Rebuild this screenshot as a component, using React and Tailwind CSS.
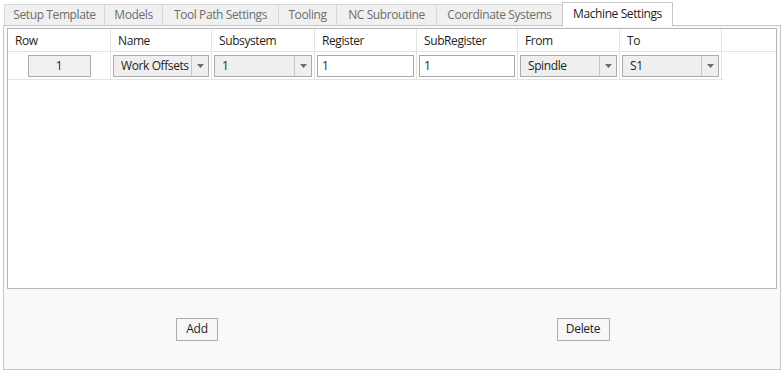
const TABS = [
  { label: "Setup Template", w: "w-[101px]" },
  { label: "Models", w: "w-[58px]" },
  { label: "Tool Path Settings", w: "w-[116px]" },
  { label: "Tooling", w: "w-[58px]" },
  { label: "NC Subroutine", w: "w-[100px]" },
  { label: "Coordinate Systems", w: "w-[126px]" },
];

const COLUMNS = [
  { label: "Row", w: "w-[103px]" },
  { label: "Name", w: "w-[101px]" },
  { label: "Subsystem", w: "w-[103px]" },
  { label: "Register", w: "w-[102px]" },
  { label: "SubRegister", w: "w-[101px]" },
  { label: "From", w: "w-[102px]" },
  { label: "To", w: "w-[102px]" },
];

function Combo({ value }) {
  return (
    <div className="flex h-[22px] w-full border border-[#acacac] bg-[#efefef]">
      <span className="flex-1 overflow-hidden whitespace-nowrap pl-[7px] leading-[20px]">{value}</span>
      <span className="flex w-[17px] shrink-0 items-center justify-center border-l border-[#c8c8c8]">
        <svg width="7" height="4" viewBox="0 0 7 4">
          <path d="M0 0h7L3.5 4z" fill="#6b6b6b" />
        </svg>
      </span>
    </div>
  );
}

function TextBox({ value }) {
  return (
    <div className="h-[22px] w-full border border-[#a8a8a8] bg-white pl-[4px] leading-[20px]">{value}</div>
  );
}

function Button({ children, w }) {
  return (
    <button className={`h-[23px] ${w} border border-[#adadad] bg-[#f7f7f7] text-[12px] tracking-[-0.3px] text-[#1e1e1e]`}>
      {children}
    </button>
  );
}

export default function App() {
  return (
    <div className="h-[371px] w-[784px] bg-white text-[12px] tracking-[-0.4px] text-[#1e1e1e] [font-family:'Segoe_UI','Open_Sans',sans-serif]">
      <div className="flex items-end pl-[4px] pt-[2px]">
        {TABS.map((t, i) => (
          <div
            key={t.label}
            className={`${t.w} h-[21px] border-t border-r border-[#d9d9d9] bg-[#f0f0f0] text-center leading-[20px] text-[#6d6d6d] ${i === 0 ? "border-l" : ""}`}
          >
            {t.label}
          </div>
        ))}
        <div className="relative z-10 -mb-px ml-[-1px] h-[24px] w-[111px] border border-b-0 border-[#c8c8c8] bg-white text-center leading-[22px]">
          Machine Settings
        </div>
      </div>
      <div className="mx-[3px] flex h-[345px] flex-col border border-[#c8c8c8] bg-[#f9f9f9]">
        <div className="mx-[3px] mt-[2px] h-[261px] border border-[#b9b9b9] bg-white">
          <div className="flex h-[23px] border-b border-[#e3e3e3]">
            {COLUMNS.map((c) => (
              <div key={c.label} className={`${c.w} border-r border-[#e3e3e3] pl-[7px] pt-[1px] leading-[22px]`}>
                {c.label}
              </div>
            ))}
          </div>
          <div className="flex h-[28px] w-[715px] border-b border-[#e3e3e3]">
            <div className="flex w-[103px] items-center justify-center border-r border-[#e3e3e3]">
              <div className="h-[22px] w-[63px] border border-[#acacac] bg-[#f0f0f0] text-center leading-[20px]">1</div>
            </div>
            <div className="flex w-[101px] items-center border-r border-[#e3e3e3] px-[2px]">
              <Combo value="Work Offsets" />
            </div>
            <div className="flex w-[103px] items-center border-r border-[#e3e3e3] px-[2px]">
              <Combo value="1" />
            </div>
            <div className="flex w-[102px] items-center border-r border-[#e3e3e3] px-[2px]">
              <TextBox value="1" />
            </div>
            <div className="flex w-[101px] items-center border-r border-[#e3e3e3] px-[2px]">
              <TextBox value="1" />
            </div>
            <div className="flex w-[102px] items-center border-r border-[#e3e3e3] px-[2px]">
              <Combo value="Spindle" />
            </div>
            <div className="flex w-[102px] items-center border-r border-[#e3e3e3] px-[2px]">
              <Combo value="S1" />
            </div>
          </div>
        </div>
        <div className="grid flex-1 grid-cols-2 items-center justify-items-center pr-[4px]">
          <Button w="w-[42px]">Add</Button>
          <Button w="w-[53px]">Delete</Button>
        </div>
      </div>
    </div>
  );
}
